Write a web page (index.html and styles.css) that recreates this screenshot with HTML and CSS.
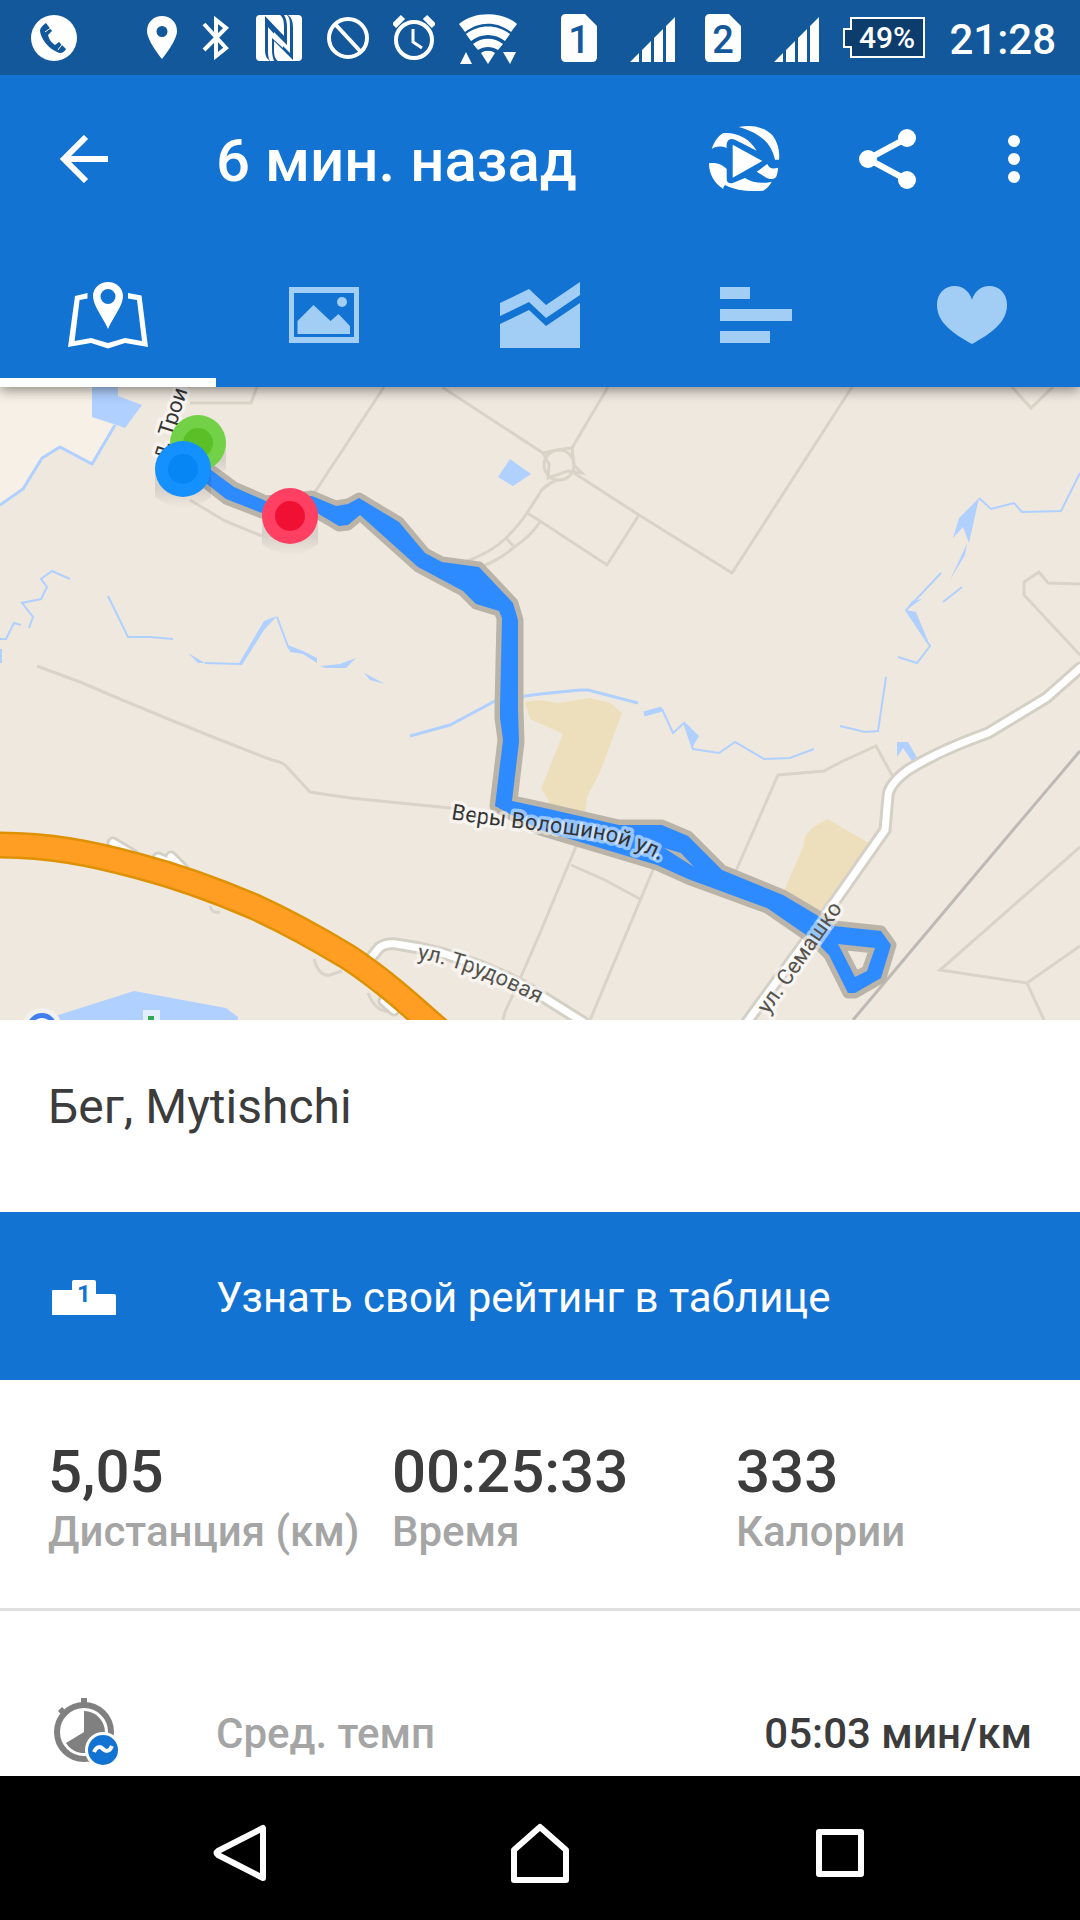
FILE: index.html
```html
<!DOCTYPE html>
<html lang="ru">
  <head>
    <meta charset="UTF-8" />
    <meta name="viewport" content="width=device-width, initial-scale=1.0" />
    <title>6 мин. назад</title>
    <link rel="stylesheet" href="styles.css">
  </head>
  <body>
    <!-- Status bar -->
    <div class="status">
      <svg class="status-call" width="48" height="48" viewBox="0 0 48 48">
        <circle cx="24" cy="24" r="23" fill="#fff" />
        <path fill="#12589b" d="M16 9l6 8-4 4c1 5 4 8 7 10l4-3 7 7c-2 4-6 5-9 3C18 34 11 25 10 17c0-3 3-6 6-8z" />
        <path stroke="#fff" stroke-width="1" d="M15 18l7-5M28 36l5-7" />
      </svg>
      <div class="status-icons">
        <svg width="30" height="48" viewBox="0 0 30 48" fill="#fff">
          <path fill-rule="evenodd" d="M15 2C7 2 0 8 0 17c0 10 15 28 15 28s15-18 15-28C30 8 23 2 15 2zm0 10a5.500 5.500 0 110 11 5.500 5.500 0 010-11z" />
        </svg>
        <svg width="30" height="48" viewBox="0 0 30 48" fill="none" stroke="#fff" stroke-width="4">
          <path d="M3 10l22 24-10 8V6l10 8L3 36" />
        </svg>
        <svg width="48" height="48" viewBox="0 0 48 48">
          <rect x="1" y="1" width="46" height="46" rx="4" fill="#fff" />
          <path fill="#12589b" d="M10 2l19 20v-9c0-6-1-10-4-12h8c4 3 5 7 5 13v32L19 27v9c0 5 1 9 4 11h-8c-4-3-5-6-5-12z" />
          <path fill="#fff" d="M13 13l15 17v4L17 24v12c0 5 1 8 2 11h-4c-2-3-2-7-2-12zM19 18l13 13V14c0-6-1-10-3-13h3c3 3 3 7 3 13v25L19 23z" />
        </svg>
        <svg width="42" height="48" viewBox="0 0 42 48" fill="none" stroke="#fff" stroke-width="4">
          <circle cx="21" cy="24" r="19" />
          <path d="M8 10l26 28" />
        </svg>
        <svg width="42" height="48" viewBox="0 0 42 48" fill="none" stroke="#fff" stroke-width="4">
          <circle cx="21" cy="26" r="18" />
          <path stroke-width="6" d="M1 12l9-9M32 3l9 9" />
          <path stroke-width="3" d="M20 15v13l9 6" />
        </svg>
        <svg width="58" height="54" viewBox="3 0 58 54" fill="#fff">
          <path d="M3 13c15-13 43-13 58 0l-6 8c-14-11-32-11-46 0z" />
          <path d="M10 23c13-10 31-10 44 0l-5 7c-10-8-24-8-34 0z" />
          <path d="M17 33c9-7 21-7 30 0l-5 6c-6-4-14-4-20 0z" />
          <path d="M25 42c4-3 10-3 14 0l-7 11zM4 53l6-12 6 12zM47 41h13l-6 12z" />
        </svg>
      </div>
      <div class="status-right">
        <div class="status-sims">
          <svg width="114" height="50" viewBox="0 0 114 50" fill="#fff">
            <path d="M5 1h19l12 12v31q0 5-5 5H5q-5 0-5-5V6q0-5 5-5z" />
            <text class="sim-number" x="18" y="40" text-anchor="middle">1</text>
            <path d="M69 49h9v-9zM81 49h9V28l-9 9zM93 49h9V16l-9 9zM105 49h9V4l-9 9z" />
          </svg>
          <svg width="114" height="50" viewBox="0 0 114 50" fill="#fff">
            <path d="M5 1h19l12 12v31q0 5-5 5H5q-5 0-5-5V6q0-5 5-5z" />
            <text class="sim-number" x="18" y="40" text-anchor="middle">2</text>
            <path d="M69 49h9v-9zM81 49h9V28l-9 9zM93 49h9V16l-9 9zM105 49h9V4l-9 9z" />
          </svg>
        </div>
        <svg width="82" height="42" viewBox="0 0 82 42">
          <path fill="#0c3d6d" stroke="#fff" stroke-width="2" d="M8 1h73v39H8V30H1V12h7z" />
          <text class="battery-level" x="44" y="31" text-anchor="middle">49%</text>
        </svg>
        <span class="clock">21:28</span>
      </div>
    </div>

    <header class="header">
      <div class="toolbar">
        <button class="icon-btn back" type="button" aria-label="Назад">
          <svg width="48" height="48" viewBox="0 0 48 48" fill="none" stroke="#fff" stroke-width="6">
            <path d="M48 24H5M26 2L4 24l22 22" />
          </svg>
        </button>
        <h1 class="title">6 мин. назад</h1>
        <div class="actions">
          <button class="icon-btn" type="button" aria-label="Воспроизвести">
            <svg width="72" height="68" viewBox="0 0 72 68" fill="#fff">
              <path d="M30.700 2C44-1 57 2 65 11c5 7 7 16 6 23.700h-4C64 22 58 10 30.700 2z" />
              <path d="M3.700 24C6 17 10 11 15.300 8c14-1 27 6 33.400 17.700L27 14.700c-5-2-9 0-8.300 8.300-5-2-10-2-15 1z" />
              <path d="M24.700 19.700L54.300 36 24.700 52.700z" />
              <path d="M1 38.300C9 37 15 40 18.700 44v10c0 4 3 5 6 4L37 53c8 5 17 6 26.700 3.700-2 4-5 7-8.400 9-14 1-28 0-38.300-5.700-1 1-2 3-1.700 4C6 58 1 49 1 38.300z" />
              <path d="M48.700 46.700L59.300 39c2 5 6 5 10.700 3.700 0 4-1 7-2 9.600-4 3-8 2-12-1z" />
            </svg>
          </button>
          <button class="icon-btn" type="button" aria-label="Поделиться">
            <svg width="60" height="62" viewBox="0 0 60 62" fill="#fff">
              <path d="M49 10L10 31l39 21" fill="none" stroke="#fff" stroke-width="6" />
              <circle cx="49" cy="10" r="9" />
              <circle cx="10" cy="31" r="9" />
              <circle cx="49" cy="52" r="9" />
            </svg>
          </button>
          <button class="icon-btn" type="button" aria-label="Ещё">
            <svg width="36" height="48" viewBox="0 0 36 48" fill="#fff">
              <circle cx="18" cy="6" r="6" />
              <circle cx="18" cy="24" r="6" />
              <circle cx="18" cy="42" r="6" />
            </svg>
          </button>
        </div>
      </div>

      <nav class="tabs">
        <a class="tab active" href="#map" aria-label="Карта">
          <svg width="84" height="72" viewBox="0 0 84 72" fill="currentColor">
            <path fill-rule="evenodd" d="M42 3c-8 0-15 6-15 14 0 10 10 21 15 33 5-12 15-23 15-33 0-8-7-14-15-14zm0 7a7.500 7.500 0 110 15 7.500 7.500 0 010-15z" />
            <path d="M21.500 14L9 17 2 68l23-4 17 5.500L59 64l23 4-6.500-51.500L62 14v5.500l9 1.500 5 41-17-3-17 5-17-5-16.400 3 5-41 7.900-1.500z" />
          </svg>
        </a>
        <a class="tab" href="#photos" aria-label="Фото">
          <svg width="84" height="72" viewBox="0 0 84 72" fill="currentColor">
            <path fill-rule="evenodd" d="M7 8h70v56H7zM12 14v44h60V14z" />
            <path d="M15.500 42l16-16 17 16 8-7L68 47v8H15.500z" />
            <circle cx="60" cy="23" r="5" />
          </svg>
        </a>
        <a class="tab" href="#chart" aria-label="Графики">
          <svg width="84" height="72" viewBox="0 0 84 72" fill="currentColor">
            <path d="M2 24l29-14 17 16L82 3v13L48 39 31 23 2 37z" />
            <path d="M2 45l29-14 17 16 34-23v45H2z" />
          </svg>
        </a>
        <a class="tab" href="#laps" aria-label="Круги">
          <svg width="84" height="72" viewBox="0 0 84 72" fill="currentColor">
            <path d="M6 8h30v12H6zM6 30h72v12H6zM6 52h50v12H6z" />
          </svg>
        </a>
        <a class="tab" href="#pulse" aria-label="Пульс">
          <svg width="84" height="72" viewBox="0 0 84 72" fill="currentColor">
            <path d="M42 65C22 54 7 43 7 26 7 14 15 7 25 7c8 0 15 6 17 14C44 13 51 7 59 7c10 0 18 7 18 19 0 17-15 28-35 39z" />
          </svg>
        </a>
      </nav>
    </header>

    <main class="content">
      <div class="map" id="map">
        <svg class="map-canvas" viewBox="0 0 1080 633" preserveAspectRatio="xMidYMid slice">
          <defs>
            <path id="road-voloshinoy" d="M451 432C500 441 580 446 615 456S650 470 690 486" />
            <path id="road-trudovaya" d="M417 572C450 577 490 590 560 628" />
            <path id="track" d="M207 80L234 100l32 14 46-5 24 10 12-2 11-6 40 24 26 31 17 9 37 5 34 36 5 17v90l1 32-7 59 28 6 79 18h43l26 11 34 34 61 25 32 19 19 12 47 5 10 14-10 33-26 15h-7l-19-38-14-14-48-33-79-29-31-14-117-35-45-24 8-66-3-22v-10l2-90-3-7-23-7-13-13-45-24-58-52-12 10-9 1-22-13-55 0-36-14-19-15zM838 557l37 4-8 23-12 6zM664 461l17 5 13 14z" />
            <linearGradient id="marker-shadow" x1="0" y1="0" x2="0" y2="1">
              <stop offset="0.5" stop-color="#000" stop-opacity="0.1" />
              <stop offset="1" stop-color="#000" stop-opacity="0" />
            </linearGradient>
          </defs>

          <!-- land -->
          <rect width="1080" height="633" fill="#efe8df" />
          <path fill="#f7f0e6" d="M0 0h92v30l22 8-22 38-32-16-18 11-19 31-23 16z" />
          <g fill="#eddfbb">
            <path d="M525 315l15-2 18 3 32-5 20 5 12 10-22 59-13 25-2 17-35-7-2-8-7-10 22-55-33-15z" />
            <path d="M783 506l20-46 2-10 7-9 15-9 42 24-36 57-18 13z" />
          </g>

          <!-- water -->
          <g fill="#b0d0ff">
            <path d="M92 0h26v9l24 9-17 23-11-4-22-7zM510 72l21 15-18 12-15-9z" />
            <path d="M188 266l17 10h-7zM238 278l26-44 13-5-13 14-22 35zM288 258l15 6 14 7v5l-14-9-13-2zM320 279l20-2 16-6-10 10h-20zM364 286l21 11-15-4z" />
            <path d="M979 111l-10 45-6-16-10 11 6-20zM967 156l-2 12-15 25 14-30zM906 223l10 2 14 34zM906 223l6-9 10-2zM897 355h11l11 19-5 3-11-16-6 9zM685 335l14 14-7 12z" />
            <path d="M52 630l82-26 92 17 12 9v3H45z" />
          </g>
          <g class="stream">
            <path d="M115 38L92 77 60 60 42 71l-19 31-23 16" stroke-width="3" />
            <path d="M70 192l-18-8-11 8 6 8-6 12-19 4 11 14-4 11M21 238l-7-2-8 16H0M1 262v14" />
            <path d="M108 209l20 41h22l23 2M205 276l35 1M277 230l12 32" />
            <path d="M410 349l40-11 47-25 43-6 40-4h8l50 13" stroke-width="3" />
            <path d="M644 327l18-5" stroke-width="5" />
            <path d="M662 322l11 24 11-10 9 26 26 4 16-11 29 17 26-1 24-9M840 339l25 6 13-1 8-54" />
            <path d="M898 270l19 6 13-17-24-36 35-37M943 215l19-15M979 111l12 11 23-6 8 9 39-1 19-38" />
          </g>

          <!-- minor roads -->
          <g class="path">
            <path d="M190 16h61l6-16M384 0l-69 105M442 0l101 66M608 0l-36 61M574 86l65 42 93 58L852 0M639 128l-32 50-67-44-13-8" />
            <path d="M557 93q-14 6-17 13l-13 20q-8 12-21 25-14 14-41 24M540 135q-10 15-27 26-14 12-30 18M506 151l9 10M543 66l14-3 15-2 2 17 8 8-14-2-20 7 1-14z" />
            <circle cx="559" cy="78" r="15" />
            <path d="M1012 0l19 21 22-21M1080 197l-32-1-9-11-15 10v13l56 60" />
            <path d="M37 279l43 16q100 43 192 78 10 2 14 6l24 26 40 6 110 11M190 113l35 21 37 15" />
            <path d="M735 486l43-98 46-4 17-9 35-16 17 31M582 445l-42 101-20 46-15 33-2 8M571 478l34 15 35 19M655 478l-65 155" />
            <path d="M1080 460L940 583l87 13 17 37M1027 596l53-37" />
            <path d="M314 572q5 18 16 16l12-4M368 606q8 20 22 18M210 519q2 8 10 6" />
          </g>
          <path d="M853 633l160-190 67-79" fill="none" stroke="#bdb9b5" stroke-width="3" />

          <!-- main roads -->
          <g class="road-edge">
            <path d="M747 635l89-122 49-70 3-34q1-12 20-26 30-19 80-37l58-35 34-30" />
            <path d="M370 572l9-11q6-5 17-4l24 4q60 12 120 47l43 27M113 456l20 12M171 470l12 12M158 471l10 4M384 614l10 9" />
          </g>
          <g class="road">
            <path d="M747 635l89-122 49-70 3-34q1-12 20-26 30-19 80-37l58-35 34-30" />
            <path d="M370 572l9-11q6-5 17-4l24 4q60 12 120 47l43 27M113 456l20 12M171 470l12 12M158 471l10 4M384 614l10 9" />
          </g>
          <path class="highway-edge" d="M-5 458C50 458 90 466 138 479C180 490 220 505 255 520C290 536 320 553 348 570C380 591 405 613 443 647" />
          <path class="highway" d="M-5 458C50 458 90 466 138 479C180 490 220 505 255 520C290 536 320 553 348 570C380 591 405 613 443 647" />

          <!-- places cut off by the bottom edge -->
          <circle cx="42" cy="641" r="20" fill="#f3f1ee" />
          <circle cx="42" cy="641" r="15" fill="#4080ee" />
          <path d="M36 634q6-4 12 0" fill="none" stroke="#fff" stroke-width="2" />
          <path fill="#e3eefc" d="M143 623h17v10h-17z" />
          <path fill="#34a853" d="M148 629h6v4h-6z" />

          <!-- workout track -->
          <use href="#track" class="track-halo" />
          <use href="#track" class="track" />

          <!-- street names -->
          <g class="street">
            <text><textPath href="#road-voloshinoy">Веры Волошиной ул.</textPath></text>
            <text class="street-light"><textPath href="#road-trudovaya">ул. Трудовая</textPath></text>
            <text class="street-light" transform="translate(768 628) rotate(-55)">ул. Семашко</text>
            <text transform="translate(165 73) rotate(-72)">л. Трои</text>
          </g>

          <!-- markers -->
          <g fill="url(#marker-shadow)">
            <path d="M170 56h56v26q-28 18-56 0z" />
            <path d="M155 82h56v28q-28 22-56 0z" />
            <path d="M262 129h56v28q-28 22-56 0z" />
          </g>
          <circle cx="198" cy="56" r="28" fill="#72d147" />
          <circle cx="198" cy="56" r="15" fill="#5bbf27" />
          <circle cx="183" cy="82" r="28" fill="#1590ff" />
          <circle cx="183" cy="82" r="15" fill="#0685f5" />
          <circle cx="290" cy="129" r="28" fill="#ff4062" />
          <circle cx="290" cy="129" r="15" fill="#f01034" />
        </svg>
      </div>

      <h2 class="workout">Бег, Mytishchi</h2>

      <a class="rating" href="#rating">
        <svg width="64" height="36" viewBox="0 0 64 36">
          <path fill="#fff" d="M1 11h19V3q0-2 2-2h20q2 0 2 2v12h18q2 0 2 2v19H0V12q0-1 1-1z" />
          <text class="podium-number" x="32" y="23" text-anchor="middle">1</text>
        </svg>
        <span>Узнать свой рейтинг в таблице</span>
      </a>

      <dl class="stats">
        <div class="stat">
          <dd>5,05</dd>
          <dt>Дистанция (км)</dt>
        </div>
        <div class="stat">
          <dd>00:25:33</dd>
          <dt>Время</dt>
        </div>
        <div class="stat">
          <dd>333</dd>
          <dt>Калории</dt>
        </div>
      </dl>

      <div class="detail">
        <svg width="68" height="70" viewBox="0 0 68 70">
          <circle cx="32" cy="34" r="27" fill="none" stroke="#808080" stroke-width="6" />
          <path fill="#808080" d="M29 0h6v8h-6zM6 13l4-4 4 4-4 4z" />
          <path fill="#808080" d="M32 34V13a21 21 0 11-18 32z" />
          <circle cx="51" cy="52" r="18" fill="#fff" />
          <circle cx="51" cy="52" r="15" fill="#1273d2" />
          <path d="M42 54c3-7 7-5 9-3s6 4 9-3" fill="none" stroke="#fff" stroke-width="4" />
        </svg>
        <span class="detail-name">Сред. темп</span>
        <span class="detail-value">05:03 мин/км</span>
      </div>
    </main>

    <!-- System buttons -->
    <div class="navbar">
      <button class="icon-btn" type="button" aria-label="Система: назад">
        <svg width="60" height="60" viewBox="0 0 60 60">
          <path d="M53 5v50L8 32q-3-2 0-4z" />
        </svg>
      </button>
      <button class="icon-btn" type="button" aria-label="Домой">
        <svg width="60" height="60" viewBox="0 0 60 60">
          <path d="M30 4l26 23v30H4V27z" />
        </svg>
      </button>
      <button class="icon-btn" type="button" aria-label="Недавние">
        <svg width="60" height="60" viewBox="0 0 60 60">
          <path d="M9 9h42v42H9z" />
        </svg>
      </button>
    </div>
  </body>
</html>
```
FILE: styles.css
```css
* {
  margin: 0;
  padding: 0;
  box-sizing: border-box;
}

body {
  display: flex;
  flex-direction: column;
  min-height: 100vh;
  font-family: Roboto, "Noto Sans", sans-serif;
  font-size: 42px;
  color: #3c3c3c;
  background-color: #fff;
}

svg {
  display: block;
  flex: none;
}

.icon-btn {
  border: none;
  background: none;
  cursor: pointer;
}

/* Status bar */
.status {
  position: relative;
  z-index: 2;
  display: flex;
  align-items: center;
  height: 75px;
  padding: 0 24px 0 30px;
  color: #fff;
  background-color: #12589b;
}

.status-icons {
  display: flex;
  align-items: center;
  gap: 24px;
  margin-left: 69px;
}

.status-right {
  display: flex;
  align-items: center;
  gap: 24px;
  margin-left: auto;
}

.status-sims {
  display: flex;
  gap: 30px;
}

.sim-number {
  font-size: 38px;
  font-weight: 500;
  fill: #12589b;
}

.battery-level {
  font-size: 30px;
  font-weight: 500;
  fill: #fff;
}

.clock {
  padding-top: 4px;
  font-weight: 500;
}

/* Header */
.header {
  position: relative;
  z-index: 1;
  background-color: #1273d2;
  box-shadow: 0 3px 12px rgba(0, 0, 0, 0.45);
}

.toolbar {
  display: flex;
  align-items: center;
  height: 168px;
  padding: 0 48px 0 60px;
}

.back {
  margin-right: 108px;
}

.title {
  flex: 1;
  padding-top: 2px;
  font-size: 60px;
  font-weight: 500;
  color: #fff;
}

.actions {
  display: flex;
  align-items: center;
  gap: 78px;
}

.tabs {
  display: flex;
  height: 144px;
}

.tab {
  display: flex;
  flex: 1;
  align-items: center;
  justify-content: center;
  color: #a2cef6;
}

.tab.active {
  color: #fff;
  box-shadow: inset 0 -9px #fff;
}

/* Content */
.content {
  flex: 1;
}

.map {
  aspect-ratio: 1080 / 633;
}

.map-canvas {
  width: 100%;
  height: 100%;
}

.stream {
  fill: none;
  stroke: #b0d0ff;
  stroke-width: 2;
}

.path {
  fill: none;
  stroke: #d9d3c8;
  stroke-width: 3;
}

.road-edge,
.road {
  fill: none;
  stroke: #d5d0c5;
  stroke-width: 13;
  stroke-linecap: round;
}

.road {
  stroke: #fff;
  stroke-width: 7;
}

.highway-edge,
.highway {
  fill: none;
  stroke: #df9104;
  stroke-width: 27;
}

.highway {
  stroke: #ff9e22;
  stroke-width: 22;
}

.track-halo {
  fill: none;
  stroke: #b9b3a8;
  stroke-width: 11;
  stroke-linejoin: round;
}

.track {
  fill: #2e8bff;
  fill-rule: evenodd;
}

.street text {
  font-size: 22px;
  fill: #333;
  stroke: rgba(255, 255, 255, 0.5);
  stroke-width: 7px;
  stroke-linejoin: round;
  paint-order: stroke;
}

.street .street-light {
  fill: #55524c;
}

.workout {
  padding: 48px 48px 66px;
  font-size: 48px;
  font-weight: 400;
  line-height: 78px;
}

.rating {
  display: flex;
  align-items: center;
  gap: 100px;
  height: 168px;
  padding: 2px 52px 0;
  color: #fff;
  text-decoration: none;
  background-color: #1273d2;
}

.podium-number {
  font-size: 24px;
  font-weight: 700;
  fill: #1273d2;
}

.stats {
  display: grid;
  grid-template-columns: repeat(3, 1fr);
  padding: 57px 0 52px 48px;
  border-bottom: 3px solid #e0e0e0;
}

.stat {
  display: flex;
  flex-direction: column;
  font-weight: 500;
  white-space: nowrap;
}

.stat dd {
  font-size: 60px;
  line-height: 70px;
}

.stat dt {
  line-height: 49px;
  color: #a5a5a5;
}

.detail {
  display: flex;
  align-items: center;
  padding: 87px 48px 7px 52px;
  font-weight: 500;
}

.detail-name {
  flex: 1;
  margin-left: 96px;
  color: #a5a5a5;
}

/* System buttons */
.navbar {
  display: flex;
  align-items: center;
  height: 144px;
  padding: 10px 90px 0;
  background-color: #000;
}

.navbar .icon-btn {
  display: flex;
  flex: 1;
  justify-content: center;
}

.navbar svg {
  fill: none;
  stroke: #fff;
  stroke-width: 6;
  stroke-linejoin: round;
}
```
